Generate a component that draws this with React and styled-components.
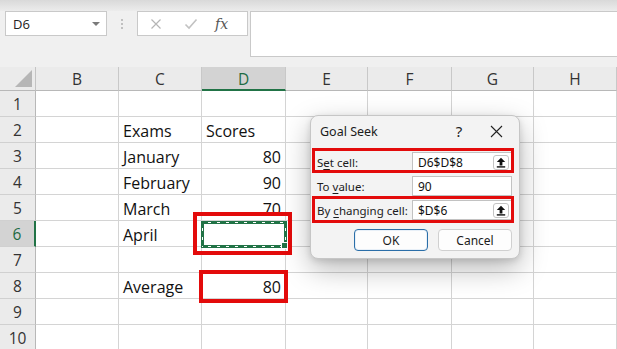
import React from "react";
import styled, { createGlobalStyle } from "styled-components";

const Global = createGlobalStyle`
  html, body { margin: 0; padding: 0; background: #fff; }
  body { font-family: "Open Sans", "Noto Sans", sans-serif; overflow: hidden; }
  * { box-sizing: border-box; }
`;

const Page = styled.div`
  position: relative;
  width: 617px;
  height: 349px;
  overflow: hidden;
  background: #fff;
`;

const TopStrip = styled.div`
  height: 11px;
  background: linear-gradient(#d9d9d9, #ececec);
`;

const Toolbar = styled.div`
  height: 56px;
  background: #f0f0f0;
  display: flex;
  align-items: flex-start;
  padding-left: 5px;
`;

const NameBox = styled.div`
  width: 102px;
  height: 25px;
  background: #fff;
  border: 1px solid #c9c9c9;
  display: flex;
  align-items: center;
  justify-content: space-between;
  padding: 0 6px 0 7px;
  font-size: 13px;
  color: #222;
`;

const Caret = styled.span`
  width: 0;
  height: 0;
  border-left: 4px solid transparent;
  border-right: 4px solid transparent;
  border-top: 4px solid #7a7a7a;
`;

const Dots = styled.div`
  width: 30px;
  height: 25px;
  display: flex;
  flex-direction: column;
  align-items: center;
  justify-content: center;
  gap: 2px;
  & span { width: 2px; height: 2px; background: #b0b0b0; border-radius: 1px; }
`;

const FxBox = styled.div`
  width: 111px;
  height: 25px;
  background: #fff;
  border: 1px solid #c9c9c9;
  display: flex;
  align-items: center;
  padding-left: 12px;
  gap: 13px;
`;

const FxText = styled.span`
  font-family: "DejaVu Serif", "Liberation Serif", serif;
  font-style: italic;
  font-size: 14px;
  color: #555;
  margin-left: 4px;
`;

const FormulaInput = styled.div`
  margin-left: 2px;
  flex: 1;
  height: 46px;
  background: #fff;
  border: 1px solid #c9c9c9;
  border-right: none;
`;

const Grid = styled.div`
  display: grid;
  grid-template-columns: 36px 83px 83px 84px 82px 84px 82px 83px;
  grid-auto-rows: 26px;
  grid-template-rows: 24px;
`;

const Corner = styled.div`
  background: #ebebeb;
  border-right: 1px solid #c4c4c4;
  border-bottom: 1px solid #b8b8b8;
  position: relative;
  &::after {
    content: "";
    position: absolute;
    right: 3px;
    bottom: 3px;
    width: 0;
    height: 0;
    border-left: 17px solid transparent;
    border-bottom: 17px solid #b6b6b6;
  }
`;

const ColHead = styled.div`
  background: ${(p) => (p.$active ? "#d3d3d3" : "#ebebeb")};
  border-right: 1px solid #c8c8c8;
  border-bottom: ${(p) => (p.$active ? "2px solid #217346" : "1px solid #b8b8b8")};
  display: flex;
  align-items: center;
  justify-content: center;
  font-size: 15.5px;
  color: ${(p) => (p.$active ? "#1e6b43" : "#333")};
  padding-top: 1px;
`;

const RowHead = styled.div`
  background: ${(p) => (p.$active ? "#d3d3d3" : "#ebebeb")};
  border-right: ${(p) => (p.$active ? "2px solid #217346" : "1px solid #b8b8b8")};
  border-bottom: 1px solid #d0d0d0;
  display: flex;
  align-items: center;
  justify-content: center;
  font-size: 15.5px;
  color: ${(p) => (p.$active ? "#1e6b43" : "#333")};
  padding-top: 1px;
`;

const Cell = styled.div`
  border-right: 1px solid #d4d4d4;
  border-bottom: 1px solid #d4d4d4;
  display: flex;
  align-items: center;
  justify-content: ${(p) => (p.$num ? "flex-end" : "flex-start")};
  padding: 2px 4px 0 4px;
  font-size: 16px;
  color: #111;
  white-space: nowrap;
`;

const RedBox = styled.div`
  position: absolute;
  border: ${(p) => p.$w || 3}px solid #e30b0b;
  pointer-events: none;
`;

const Selection = styled.div`
  position: absolute;
  left: 201px;
  top: 221px;
  width: 86px;
  height: 27px;
  border: 3px solid #217346;
  &::before {
    content: "";
    position: absolute;
    inset: -2px;
    background:
      repeating-linear-gradient(to right, transparent 0 6px, #fff 6px 9px) top / 100% 1px no-repeat,
      repeating-linear-gradient(to right, transparent 0 6px, #fff 6px 9px) bottom / 100% 1px no-repeat,
      repeating-linear-gradient(to bottom, transparent 0 6px, #fff 6px 9px) left / 1px 100% no-repeat,
      repeating-linear-gradient(to bottom, transparent 0 6px, #fff 6px 9px) right / 1px 100% no-repeat;
  }
  &::after {
    content: "";
    position: absolute;
    right: -4px;
    bottom: -4px;
    width: 5px;
    height: 5px;
    background: #217346;
    border: 1px solid #fff;
  }
`;

const Dialog = styled.div`
  position: absolute;
  left: 310px;
  top: 115px;
  width: 210px;
  height: 144px;
  background: #f3f3f3;
  border: 1px solid #c6c6c6;
  border-radius: 8px;
  box-shadow: 0 10px 28px rgba(0, 0, 0, 0.28), 0 2px 6px rgba(0, 0, 0, 0.12);
  font-family: "Noto Sans", "Open Sans", sans-serif;
  display: flex;
  flex-direction: column;
`;

const TitleBar = styled.div`
  height: 30px;
  display: flex;
  align-items: center;
  padding-left: 9px;
  font-size: 12.5px;
  color: #1b1b1b;
`;

const TitleText = styled.span`
  flex: 1;
`;

const TitleButton = styled.span`
  width: ${(p) => p.$w}px;
  display: flex;
  justify-content: center;
  align-items: center;
  font-size: 15px;
  color: #222;
`;

const Form = styled.div`
  display: flex;
  flex-direction: column;
  gap: 4px;
  padding: 6px 7px 0 6px;
`;

const FormRow = styled.div`
  display: flex;
  align-items: center;
  height: 20px;
`;

const Label = styled.span`
  width: 95px;
  font-size: 11.5px;
  color: #1b1b1b;
  & u { text-decoration-thickness: 1px; text-underline-offset: 2px; }
`;

const Input = styled.div`
  width: 100px;
  height: 20px;
  background: #fff;
  border: 1px solid #c2c2c2;
  display: flex;
  align-items: center;
  justify-content: space-between;
  padding: 0 2px 0 5px;
  font-size: 12px;
  color: #111;
`;

const RefButton = styled.span`
  width: 16px;
  height: 15px;
  border: 1px solid #c4c4c4;
  border-radius: 3px;
  background: #fff;
  display: flex;
  align-items: center;
  justify-content: center;
`;

const Buttons = styled.div`
  display: flex;
  justify-content: flex-end;
  gap: 10px;
  padding: 9px 7px 0 0;
`;

const Button = styled.div`
  width: 74px;
  height: 22px;
  border-radius: 4px;
  background: #fdfdfd;
  border: 1px solid ${(p) => (p.$primary ? "#2a6ea8" : "#d0d0d0")};
  box-shadow: ${(p) => (p.$primary ? "inset 0 0 0 1px #e8f0f8" : "none")};
  display: flex;
  align-items: center;
  justify-content: center;
  font-size: 12px;
  color: #1b1b1b;
`;

const UpArrow = () => (
  <svg width="10" height="11" viewBox="0 0 10 11">
    <path d="M5 0.8 L9.2 5 H6.4 V8.4 H3.6 V5 H0.8 Z" fill="#111" />
    <rect x="0.8" y="9.2" width="8.4" height="1.4" fill="#111" />
  </svg>
);

const cols = ["B", "C", "D", "E", "F", "G", "H"];
const data = {
  2: { C: "Exams", D: "Scores" },
  3: { C: "January", D: 80 },
  4: { C: "February", D: 90 },
  5: { C: "March", D: 70 },
  6: { C: "April" },
  8: { C: "Average", D: 80 },
};

export default function App() {
  return (
    <Page>
      <Global />
      <TopStrip />
      <Toolbar>
        <NameBox>
          <span>D6</span>
          <Caret />
        </NameBox>
        <Dots>
          <span />
          <span />
          <span />
        </Dots>
        <FxBox>
          <svg width="12" height="12" viewBox="0 0 12 12">
            <path d="M1.5 1.5 L10.5 10.5 M10.5 1.5 L1.5 10.5" stroke="#b5b5b5" strokeWidth="1.2" />
          </svg>
          <svg width="14" height="12" viewBox="0 0 14 12" style={{ marginLeft: 9 }}>
            <path d="M1.5 6.5 L5 10 L12.5 1.5" stroke="#c2c2c2" strokeWidth="1.6" fill="none" />
          </svg>
          <FxText>fx</FxText>
        </FxBox>
        <FormulaInput />
      </Toolbar>
      <Grid>
        <Corner />
        {cols.map((c) => (
          <ColHead key={c} $active={c === "D"}>
            {c}
          </ColHead>
        ))}
        {Array.from({ length: 10 }, (_, i) => i + 1).map((r) => (
          <React.Fragment key={r}>
            <RowHead $active={r === 6}>{r}</RowHead>
            {cols.map((c) => {
              const v = data[r] && data[r][c];
              return (
                <Cell key={c} $num={typeof v === "number"}>
                  {v}
                </Cell>
              );
            })}
          </React.Fragment>
        ))}
      </Grid>
      <Selection />
      <RedBox $w={4} style={{ left: 193, top: 212, width: 99, height: 43 }} />
      <RedBox $w={4} style={{ left: 199, top: 270, width: 89, height: 33 }} />
      <Dialog>
        <TitleBar>
          <TitleText>Goal Seek</TitleText>
          <TitleButton $w={30}>?</TitleButton>
          <TitleButton $w={15} style={{ marginLeft: 15, marginRight: 15 }}>
            <svg width="13" height="13" viewBox="0 0 13 13">
              <path d="M1 1 L12 12 M12 1 L1 12" stroke="#222" strokeWidth="1.1" />
            </svg>
          </TitleButton>
        </TitleBar>
        <Form>
          <FormRow>
            <Label>
              S<u>e</u>t cell:
            </Label>
            <Input>
              <span>D6$D$8</span>
              <RefButton>
                <UpArrow />
              </RefButton>
            </Input>
          </FormRow>
          <FormRow>
            <Label>
              To <u>v</u>alue:
            </Label>
            <Input>
              <span>90</span>
            </Input>
          </FormRow>
          <FormRow>
            <Label>
              By <u>c</u>hanging cell:
            </Label>
            <Input>
              <span>$D$6</span>
              <RefButton>
                <UpArrow />
              </RefButton>
            </Input>
          </FormRow>
        </Form>
        <Buttons>
          <Button $primary>OK</Button>
          <Button>Cancel</Button>
        </Buttons>
      </Dialog>
      <RedBox style={{ left: 312, top: 148, width: 202, height: 25 }} />
      <RedBox style={{ left: 312, top: 196, width: 202, height: 27 }} />
    </Page>
  );
}
